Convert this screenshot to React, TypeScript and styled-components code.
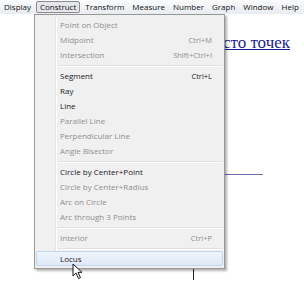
import React from "react";
import styled, { createGlobalStyle } from "styled-components";

const Global = createGlobalStyle`
  html, body { margin: 0; padding: 0; background: #fff; overflow: hidden; }
  #root { width: 304px; height: 285px; }
`;

const Screen = styled.div`
  position: relative;
  width: 304px;
  height: 285px;
  overflow: hidden;
  background: #fff;
  font-family: "Open Sans", "Noto Sans", sans-serif;
`;

const MenuBar = styled.div`
  display: flex;
  align-items: center;
  height: 14px;
  background: linear-gradient(#fbfcfd, #e8ebf0);
`;

const MenuTitle = styled.div<{ $active?: boolean }>`
  box-sizing: border-box;
  height: 12px;
  padding: ${(p) => (p.$active ? "0 3px" : "1px 4px 0")};
  margin: 0 ${(p) => (p.$active ? 1 : 0)}px;
  font-size: 8px;
  line-height: 10px;
  color: #111;
  border: ${(p) => (p.$active ? "1px solid #8c8c8c" : "0")};
  border-radius: 2px;
  background: ${(p) => (p.$active ? "#e4e6ea" : "transparent")};
  white-space: nowrap;
`;

const Page = styled.div`
  padding-top: 20px;
`;

const Heading = styled.div`
  padding-right: 14px;
  text-align: right;
  white-space: nowrap;
  font-family: "Liberation Serif", "DejaVu Serif", serif;
  font-size: 17px;
  line-height: 18px;
  color: #1c1c8c;
  text-decoration: underline;
`;

const Drawing = styled.svg`
  display: block;
`;

const Dropdown = styled.div`
  position: absolute;
  left: 34px;
  top: 14px;
  width: 191px;
  box-sizing: border-box;
  padding: 2px 1px;
  background: #f0f0f0;
  border: 1px solid #979797;
  box-shadow: 2px 2px 2px rgba(0, 0, 0, 0.3);
  &::before {
    content: "";
    position: absolute;
    left: 20px;
    top: 2px;
    bottom: 2px;
    width: 1px;
    background: #e2e3e3;
    box-shadow: 1px 0 0 #ffffff;
  }
`;

const Item = styled.div<{ $disabled?: boolean; $hover?: boolean }>`
  position: relative;
  display: flex;
  justify-content: space-between;
  align-items: center;
  box-sizing: border-box;
  height: 15px;
  padding: 0 10px 0 23px;
  font-size: 8px;
  color: ${(p) => (p.$disabled ? "#8f8f8f" : "#1a1a1a")};
  border: 1px solid ${(p) => (p.$hover ? "#c3d6ee" : "transparent")};
  border-radius: 2px;
  background: ${(p) =>
    p.$hover ? "linear-gradient(#eef4fc, #dfe9f6)" : "transparent"};
`;

const Shortcut = styled.span`
  font-size: 7.5px;
`;

const Separator = styled.div`
  height: 6px;
  display: flex;
  align-items: center;
  padding-left: 22px;
  &::after {
    content: "";
    flex: 1;
    height: 1px;
    background: #e0e0e0;
    box-shadow: 0 1px 0 #ffffff;
  }
`;

const Cursor = styled.svg`
  position: absolute;
  left: 72px;
  top: 263px;
`;

type Entry =
  | { sep: true }
  | { label: string; key?: string; disabled?: boolean; hover?: boolean };

const entries: Entry[] = [
  { label: "Point on Object", disabled: true },
  { label: "Midpoint", key: "Ctrl+M", disabled: true },
  { label: "Intersection", key: "Shift+Ctrl+I", disabled: true },
  { sep: true },
  { label: "Segment", key: "Ctrl+L" },
  { label: "Ray" },
  { label: "Line" },
  { label: "Parallel Line", disabled: true },
  { label: "Perpendicular Line", disabled: true },
  { label: "Angle Bisector", disabled: true },
  { sep: true },
  { label: "Circle by Center+Point" },
  { label: "Circle by Center+Radius", disabled: true },
  { label: "Arc on Circle", disabled: true },
  { label: "Arc through 3 Points", disabled: true },
  { sep: true },
  { label: "Interior", key: "Ctrl+P", disabled: true },
  { sep: true },
  { label: "Locus", hover: true },
];

const menus = ["Display", "Construct", "Transform", "Measure", "Number", "Graph", "Window", "Help"];

export default function App() {
  return (
    <Screen>
      <Global />
      <MenuBar>
        {menus.map((m) => (
          <MenuTitle key={m} $active={m === "Construct"}>
            {m}
          </MenuTitle>
        ))}
      </MenuBar>
      <Page>
        <Heading>сто точек</Heading>
        <Drawing width={304} height={233}>
          <line x1={225} y1={122.5} x2={263} y2={122.5} stroke="#6b6bb0" strokeWidth={1} />
          <line x1={193.5} y1={214} x2={193.5} y2={228} stroke="#222" strokeWidth={1} />
        </Drawing>
      </Page>
      <Dropdown>
        {entries.map((e, i) =>
          "sep" in e ? (
            <Separator key={i} />
          ) : (
            <Item key={i} $disabled={e.disabled} $hover={e.hover}>
              <span>{e.label}</span>
              {e.key && <Shortcut>{e.key}</Shortcut>}
            </Item>
          )
        )}
      </Dropdown>
      <Cursor width={12} height={18} viewBox="0 0 12 18">
        <path d="M1 1 L1 13 L4 10 L6.5 15.5 L8.5 14.6 L6 9.3 L10 9.3 Z" fill="#fff" stroke="#000" strokeWidth={0.9} strokeLinejoin="round" />
      </Cursor>
    </Screen>
  );
}
